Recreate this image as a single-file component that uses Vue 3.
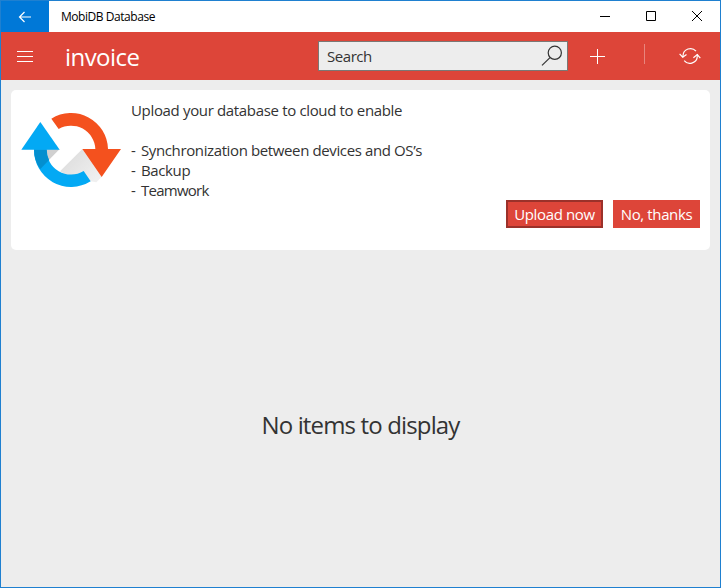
<script setup>
const benefits = ['Synchronization between devices and OS’s', 'Backup', 'Teamwork']
</script>

<template>
  <div class="window">
    <header class="titlebar">
      <button class="back" aria-label="Back">
        <svg width="14" height="12" viewBox="0 0 14 12"><path d="M13 6H1.5M6.5 1L1.5 6l5 5" /></svg>
      </button>
      <span class="app-name">MobiDB Database</span>
      <div class="controls">
        <svg width="46" height="31" viewBox="0 0 46 31"><path d="M17 15.5h10" /></svg>
        <svg width="46" height="31" viewBox="0 0 46 31"><path d="M17.5 10.5h9v9h-9z" /></svg>
        <svg width="46" height="31" viewBox="0 0 46 31"><path d="M17 10l10 10M27 10l-10 10" /></svg>
      </div>
    </header>

    <nav class="toolbar">
      <svg class="menu" width="16" height="12" viewBox="0 0 16 12"><path d="M0 .5h16M0 5.5h16M0 10.5h16" /></svg>
      <h1>invoice</h1>
      <div class="search">
        <span>Search</span>
        <svg width="22" height="22" viewBox="0 0 22 22"><circle cx="13.8" cy="7.8" r="6.6" /><path d="M9 12.6L1 20.4" /></svg>
      </div>
      <svg class="plus" width="15" height="15" viewBox="0 0 15 15"><path d="M0 7.5h15M7.5 0v15" /></svg>
      <i class="divider"></i>
      <svg class="sync" width="22" height="18" viewBox="0 0 22 18">
        <path d="M4 10.2V8.8A7.4 7.4 0 0 1 17 4.2M18.3 7.3v1.5A7.4 7.4 0 0 1 5.2 13.6" />
        <path d="M.6 6.8L3.7 10.2 7.5 7.6M14.4 10.8L18.3 7.6 21.3 11.2" />
      </svg>
    </nav>

    <main>
      <section class="card">
        <svg class="logo" width="102" height="76" viewBox="30 81 306 228">
          <defs>
            <linearGradient id="shade" x1="180" y1="220" x2="250" y2="290" gradientUnits="userSpaceOnUse">
              <stop offset="0" stop-color="#e0e0e0" />
              <stop offset="1" stop-color="#efefef" />
            </linearGradient>
          </defs>
          <path fill="url(#shade)" d="M217 192L150 259 190 285 242 289 259 292 275 276z" />
          <path fill="#d0d0d0" d="M108 192H149L116 226z" />
          <path fill="#03a9f4" d="M72 193A111 111 0 0 0 242 289L221 258A73 73 0 0 1 110 193z" />
          <path fill="#038fcf" d="M72 193H110Q110 209 117 225L91 252Q72 227 72 193z" />
          <path fill="#03a9f4" d="M91 111L149 194H34z" />
          <path fill="#f4511e" d="M124 101A111 111 0 0 1 294 192H333L275 276 217 192H256A73 73 0 0 0 146 132z" />
        </svg>
        <div class="copy">
          <p class="lead">Upload your database to cloud to enable</p>
          <p v-for="item in benefits" :key="item"><span class="dash">-</span>{{ item }}</p>
        </div>
        <div class="actions">
          <button class="primary"><span>Upload now</span></button>
          <button><span>No, thanks</span></button>
        </div>
      </section>
      <p class="empty">No items to display</p>
    </main>
  </div>
</template>

<style>
body {
  margin: 0;
}
</style>

<style scoped>
* {
  box-sizing: border-box;
}
.window {
  width: 721px;
  height: 588px;
  border: 1px solid #1f80d0;
  background: #ededed;
  font-family: "Open Sans", "Noto Sans", sans-serif;
  color: #333;
  display: flex;
  flex-direction: column;
  overflow: hidden;
}
svg {
  display: block;
  flex: none;
  fill: none;
}
p,
h1 {
  margin: 0;
  white-space: nowrap;
}
button {
  border: 0;
  padding: 0;
  font: inherit;
  color: #fff;
}
.titlebar {
  height: 31px;
  flex: none;
  background: #fff;
  display: flex;
  align-items: center;
}
.back {
  width: 48px;
  height: 31px;
  background: #0078d7;
  padding-left: 17px;
}
.back svg {
  stroke: #fff;
  stroke-width: 1.2;
}
.app-name {
  margin-left: 12px;
  font-size: 12px;
  line-height: 29px;
  margin-top: -1px;
  letter-spacing: -0.45px;
  color: #000;
}
.controls {
  margin-left: auto;
  display: flex;
  margin-right: -1px;
}
.controls svg {
  stroke: #000;
}
.toolbar {
  height: 48px;
  flex: none;
  background: #dd4539;
  display: flex;
  align-items: center;
}
.toolbar > svg {
  stroke: #fff;
}
.menu {
  margin: 2px 0 0 16px;
}
h1 {
  width: 253px;
  padding-left: 32px;
  font-size: 24px;
  line-height: 32px;
  font-weight: 400;
  letter-spacing: -0.55px;
  color: #fff;
  margin-top: 2px;
}
.search {
  margin-left: 32px;
  width: 250px;
  height: 30px;
  border: 1px solid #7b7774;
  background: #ededed;
  display: flex;
  align-items: center;
  justify-content: space-between;
  padding: 0 4px 0 8px;
  font-size: 15px;
  letter-spacing: -0.45px;
}
.search svg {
  stroke: #333;
  stroke-width: 1.2;
}
.plus {
  margin-left: 22px;
}
.divider {
  width: 1px;
  height: 20px;
  margin: -4px 0 0 39px;
  background: #e8857d;
}
.sync {
  margin-left: 34px;
  stroke-width: 1.2;
}
.card {
  height: 160px;
  margin: 10px 10px 0;
  border-radius: 5px;
  background: #fff;
  display: grid;
  grid-template: 110px 50px / 120px 1fr;
}
.logo {
  margin: 22px 0 0 9px;
}
.copy {
  padding-top: 10px;
  font-size: 15px;
  line-height: 20px;
  letter-spacing: -0.38px;
}
.lead {
  letter-spacing: -0.34px;
  margin-bottom: 20px;
}
.copy p:last-child {
  letter-spacing: -0.75px;
}
.dash {
  display: inline-block;
  width: 10px;
}
.actions {
  grid-column: 1 / 3;
  display: flex;
  justify-content: flex-end;
  gap: 10px;
  padding-right: 10px;
}
.actions button {
  width: 87px;
  height: 28px;
  background: #dd4539;
  font-size: 15px;
  line-height: 20px;
  letter-spacing: -0.37px;
  white-space: nowrap;
}
.actions .primary {
  width: 97px;
  border: 2px solid #9b312a;
}
.empty {
  margin-top: 159px;
  text-align: center;
  font-size: 24px;
  line-height: 32px;
  font-weight: 400;
  letter-spacing: -0.85px;
}
</style>
